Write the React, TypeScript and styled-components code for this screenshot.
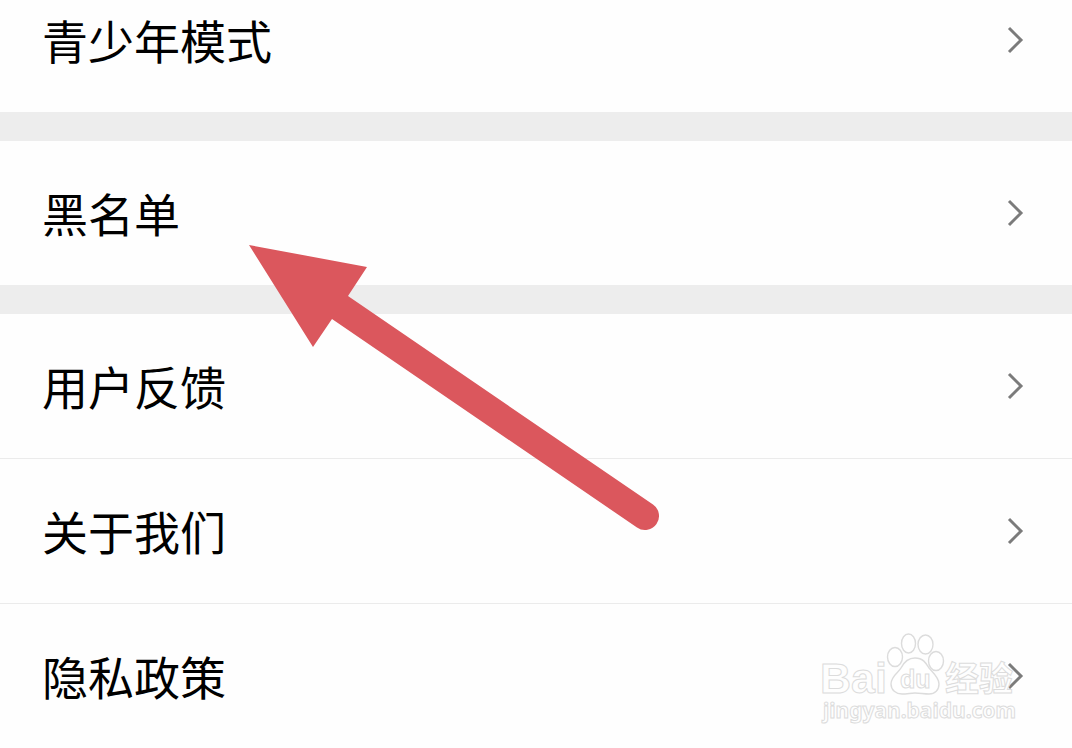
import React from 'react';
import styled, { createGlobalStyle } from 'styled-components';

const GlobalStyle = createGlobalStyle`
  body {
    margin: 0;
    background: #fefefe;
    color: #000;
    font-family: "Noto Sans CJK SC", "Noto Sans", sans-serif;
  }
`;

const Screen = styled.main`
  position: relative;
  overflow: hidden;
`;

/* The list is scrolled so that its first row is partly out of view. */
const Settings = styled.nav`
  margin-top: -32px;
`;

const Group = styled.ul`
  list-style: none;
  margin: 0;
  padding: 0;

  & + & {
    border-top: 29px solid #ededed;
  }
`;

const Item = styled.li`
  & + & {
    border-top: 1px solid #ebebeb;
  }
`;

const RowLink = styled.a`
  display: flex;
  align-items: center;
  justify-content: space-between;
  height: 144px;
  padding: 0 47px 0 42px;
  color: inherit;
  text-decoration: none;
`;

const Label = styled.span`
  padding-bottom: 2px;
  font-size: 46px;
  line-height: 64px;
`;

const Chevron = styled.svg`
  flex: none;
  width: 18px;
  height: 30px;
  fill: none;
  stroke: #7b7b7b;
  stroke-width: 3;
`;

const Arrow = styled.svg`
  position: absolute;
  left: 240px;
  top: 236px;
  width: 430px;
  height: 304px;
  fill: #db575d;
  pointer-events: none;
`;

const Watermark = styled.svg`
  position: absolute;
  right: 52px;
  bottom: 18px;
  width: 204px;
  height: 102px;
  fill: #fff;
  fill-opacity: 0.7;
  stroke: #dcdcdc;
  stroke-width: 1.4;
  pointer-events: none;
`;

const Mark = styled.text<{ $size: number; $family?: string }>`
  font-family: ${(p) => p.$family ?? '"Liberation Sans"'}, sans-serif;
  font-size: ${(p) => p.$size}px;
  font-weight: 700;
  stroke-width: 1;
`;

const groups = [['青少年模式'], ['黑名单'], ['用户反馈', '关于我们', '隐私政策']];

export default function App() {
  return (
    <Screen>
      <GlobalStyle />
      <Settings>
        {groups.map((items) => (
          <Group key={items[0]}>
            {items.map((label) => (
              <Item key={label}>
                <RowLink href="#">
                  <Label>{label}</Label>
                  <Chevron viewBox="0 0 18 30" aria-hidden="true">
                    <path d="M2 3 L14 15 L2 27" />
                  </Chevron>
                </RowLink>
              </Item>
            ))}
          </Group>
        ))}
      </Settings>

      <Arrow viewBox="240 236 430 304" aria-hidden="true">
        <path d="M249 245 L367 267 L348 296 L653 504.500 A14 14 0 0 1 637 527.500 L332 319 L313 347 Z" />
      </Arrow>

      <Watermark viewBox="816 628 204 102">
        <Mark x="820" y="693" $size={43}>Bai</Mark>
        <ellipse cx="895" cy="657" rx="7.500" ry="9.500" />
        <ellipse cx="908.500" cy="643.500" rx="7" ry="9.500" />
        <ellipse cx="925.500" cy="644.500" rx="7.500" ry="9.500" />
        <ellipse cx="936" cy="661" rx="7.500" ry="9.500" />
        <path d="M915 658 C907 658 903 664 901 668 C899 672 891 676 891 684 C891 690 896 694 902 694 C907 694 911 693 915 693 C920 693 924 694 929 694 C935 694 939 690 939 684 C939 677 932 672 929 668 C926 663 923 658 915 658 Z" />
        <Mark x="900" y="688" $size={25}>du</Mark>
        <Mark x="945" y="691" $size={34} $family={'"Noto Sans CJK SC"'}>经验</Mark>
        <Mark x="823" y="718" $size={21} $family={'"Noto Sans"'}>jingyan.baidu.com</Mark>
      </Watermark>
    </Screen>
  );
}
